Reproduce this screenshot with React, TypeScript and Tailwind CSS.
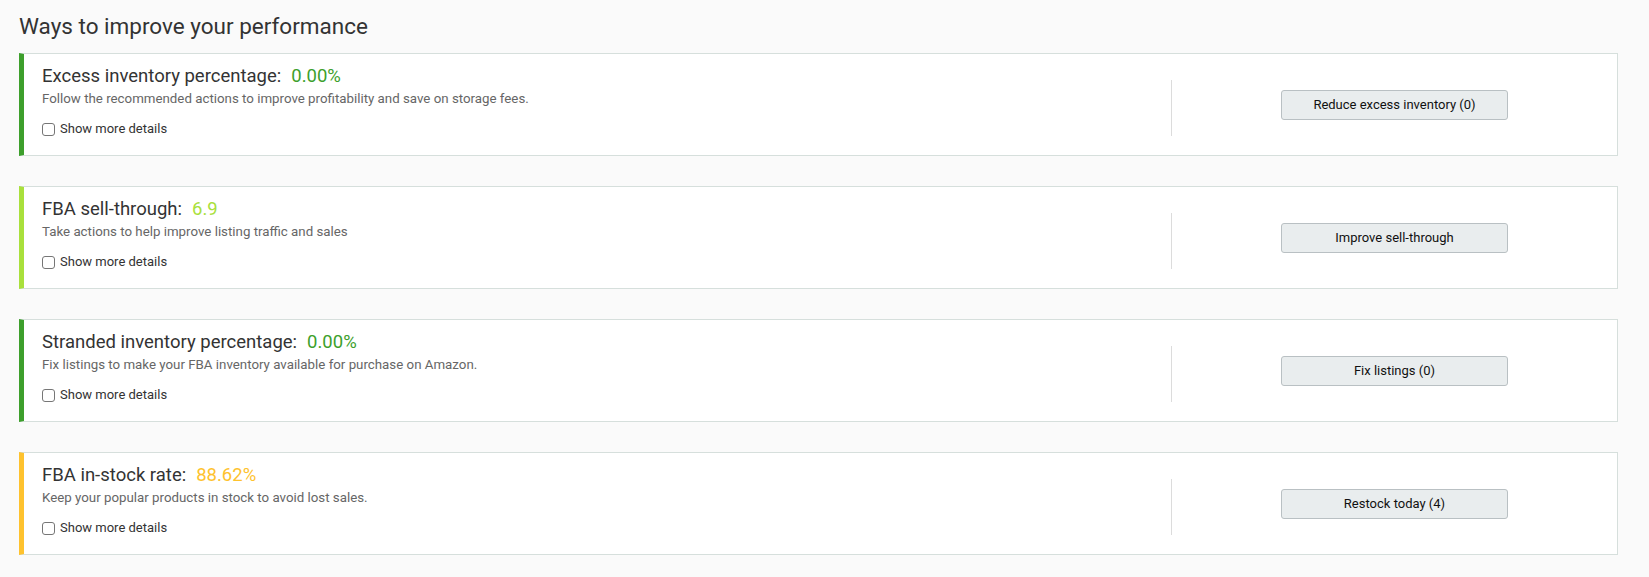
import React from 'react';

type Metric = {
  label: string;
  value: string;
  color: string;
  description: string;
  action: string;
};

const metrics: Metric[] = [
  {
    label: 'Excess inventory percentage:',
    value: '0.00%',
    color: 'green',
    description: 'Follow the recommended actions to improve profitability and save on storage fees.',
    action: 'Reduce excess inventory (0)',
  },
  {
    label: 'FBA sell-through:',
    value: '6.9',
    color: 'lime',
    description: 'Take actions to help improve listing traffic and sales',
    action: 'Improve sell-through',
  },
  {
    label: 'Stranded inventory percentage:',
    value: '0.00%',
    color: 'green',
    description: 'Fix listings to make your FBA inventory available for purchase on Amazon.',
    action: 'Fix listings (0)',
  },
  {
    label: 'FBA in-stock rate:',
    value: '88.62%',
    color: 'yellow',
    description: 'Keep your popular products in stock to avoid lost sales.',
    action: 'Restock today (4)',
  },
];

const barClass: Record<string, string> = {
  green: 'border-l-[#3d9f2c]',
  lime: 'border-l-[#a9e03c]',
  yellow: 'border-l-[#fec22e]',
};

const valueClass: Record<string, string> = {
  green: 'text-[#3d9f2c]',
  lime: 'text-[#a9e03c]',
  yellow: 'text-[#fec22e]',
};

function MetricCard({ m }: { m: Metric }) {
  return (
    <div className={`flex bg-white border border-[#d6dfdc] border-l-[5px] ${barClass[m.color]}`}>
      <div className="flex-1 pl-[18px] pt-[10px] pb-[17px]">
        <div className="text-[18.5px] leading-[24px] text-[#333]">
          {m.label}
          <span className={`ml-[10px] ${valueClass[m.color]}`}>{m.value}</span>
        </div>
        <p className="mt-[2px] text-[13.3px] leading-[18px] text-[#666]">{m.description}</p>
        <label className="mt-[12px] flex items-center gap-[5px] text-[13px] leading-[18px] text-[#333]">
          <span className="h-[13px] w-[13px] rounded-[3px] border border-[#767676] bg-white" />
          Show more details
        </label>
      </div>
      <div className="flex w-[446px] items-center">
        <div className="mt-[6px] h-[56px] w-px bg-[#dcdcdc]" />
        <div className="flex flex-1 justify-center">
          <button className="h-[30px] w-[227px] rounded-[3px] border border-[#b9c0c3] bg-[#e9edee] text-[13px] text-[#111]">
            {m.action}
          </button>
        </div>
      </div>
    </div>
  );
}

export default function App() {
  return (
    <div className="min-h-screen bg-[#fafafa] pl-[19px] pr-[31px] pt-[12px] font-['Roboto','Liberation_Sans',sans-serif]">
      <h2 className="mb-[13px] text-[22.5px] leading-[28px] text-[#333]">Ways to improve your performance</h2>
      <div className="flex flex-col gap-[30px]">
        {metrics.map((m) => (
          <MetricCard key={m.label} m={m} />
        ))}
      </div>
    </div>
  );
}
